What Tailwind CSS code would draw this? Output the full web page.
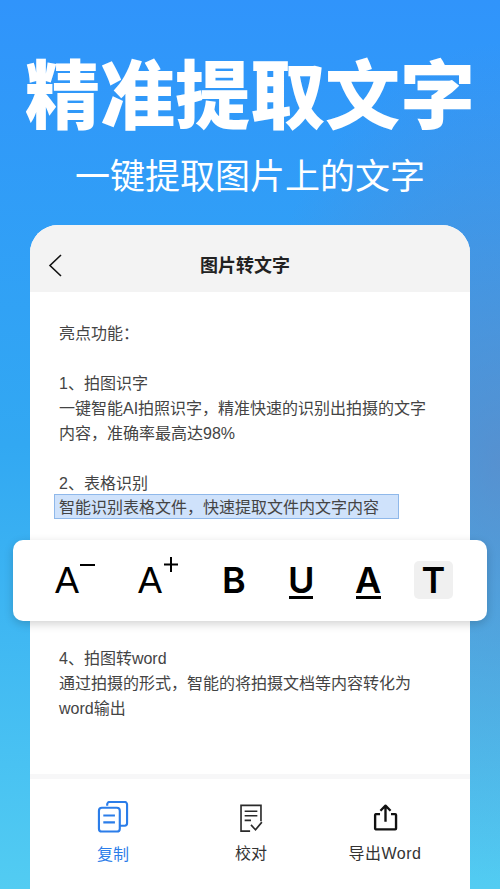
<!DOCTYPE html>
<html lang="zh">
<head>
  <meta charset="UTF-8">
  <title>精准提取文字</title>
  <script src="https://cdn.jsdelivr.net/npm/@tailwindcss/browser@4"></script>
</head>
<body class="font-['Liberation_Sans','Noto_Sans_CJK_SC',sans-serif]">
  <div class="relative w-[500px] h-[889px] overflow-hidden flex flex-col items-center bg-gradient-to-b from-[#3094fb] via-[#32a8f2] to-[#52ccf2]">
    <!-- darker patch on the right edge of the backdrop -->
    <div class="absolute inset-0 bg-[radial-gradient(ellipse_260px_420px_at_100%_52%,rgba(115,125,180,0.55),rgba(115,125,180,0))]"></div>

    <!-- Heading -->
    <h1 class="relative mt-[51px] text-[75px] leading-[92px] font-black text-white">精准提取文字</h1>
    <p class="relative mt-[12px] text-[35px] leading-[44px] text-white">一键提取图片上的文字</p>

    <!-- Phone card -->
    <div class="relative mt-[26px] w-[440px] h-[664px] flex flex-col bg-white rounded-t-[28px] overflow-hidden">
      <div class="relative h-[67px] shrink-0 flex items-center justify-center pt-[15px] pr-[10px] bg-[#f3f3f3]">
        <svg class="absolute left-[18px] top-[29px]" width="15" height="23" viewBox="0 0 15 23" fill="none" stroke="#111" stroke-width="1.6"><path d="M13 1 L2 11.5 L13 22"/></svg>
        <span class="text-[18px] font-bold text-[#222]">图片转文字</span>
      </div>
      <div class="flex-1 pl-[29px] pr-[30px] pt-[29px] text-[16px] leading-[25px] text-[#444]">
        <p>亮点功能：</p>
        <p class="mt-[25px]">1、拍图识字</p>
        <p>一键智能AI拍照识字，精准快速的识别出拍摄的文字内容，准确率最高达98%</p>
        <p class="mt-[25px]">2、表格识别</p>
        <p class="-mt-[2px] -ml-[5px] w-[345px] pl-[4px] bg-[#cfe2fb] border border-[#8fb8ea] h-[25px] whitespace-nowrap">智能识别表格文件，快速提取文件内文字内容</p>
        <p class="mt-[127px]">4、拍图转word</p>
        <p>通过拍摄的形式，智能的将拍摄文档等内容转化为word输出</p>
      </div>
      <div class="h-[115px] shrink-0 border-t-[5px] border-[#f7f7f8] grid grid-cols-[166px_110px_160px] text-[16px] text-[#333]">
        <div class="flex flex-col items-center pt-[22px] text-[#2b7de9]">
          <svg width="32" height="32" viewBox="0 0 32 33" fill="none" stroke="#2b7de9" stroke-width="2.2" stroke-linejoin="round">
            <path d="M10 5V3.5A2.5 2.5 0 0 1 12.500 1H28A2.500 2.500 0 0 1 30.500 3.500V23A2.500 2.500 0 0 1 28 25.500H23"/>
            <rect x="1.500" y="7" width="21.500" height="24.500" rx="3"/>
            <path d="M6 15H18M6 22H18"/>
          </svg>
          <span class="mt-[10px] leading-[24px]">复制</span>
        </div>
        <div class="flex flex-col items-center pt-[25px]">
          <svg width="26" height="29" viewBox="0 0 26 32" fill="none" stroke="#2a2a2a" stroke-width="1.800">
            <path d="M12 30H2V1.500H24V19"/>
            <path d="M6 8H20M6 13H20M6 18H13" />
            <path d="M13 23L18 28.500L25 20"/>
          </svg>
          <span class="mt-[9px] leading-[24px]">校对</span>
        </div>
        <div class="flex flex-col items-center pt-[25px] -translate-x-[1px]">
          <svg width="27" height="27" viewBox="0 0 27 32" fill="none" stroke="#111" stroke-width="2.800" stroke-linejoin="round">
            <path d="M7 12H2A1 1 0 0 0 1.200 13V29A1 1 0 0 0 2 30H25A1 1 0 0 0 26 29V13A1 1 0 0 0 25 12H20"/>
            <path d="M13.500 21V2M7.500 8L13.500 2L19.500 8"/>
          </svg>
          <span class="mt-[11px] leading-[24px] whitespace-nowrap tracking-[0.5px]">导出Word</span>
        </div>
      </div>
    </div>

    <!-- Text style toolbar -->
    <div class="absolute left-[13px] top-[540px] w-[474px] h-[81px] bg-white rounded-[10px] shadow-[0_3px_10px_rgba(0,0,0,0.18)] text-black">
      <div class="relative h-full flex items-center text-[36px] leading-[45px] font-['Liberation_Sans',sans-serif]">
        <span class="absolute left-[42px] top-[18px]">A</span>
        <span class="absolute left-[67px] top-[24px] w-[15px] h-[2px] bg-black"></span>
        <span class="absolute left-[125px] top-[18px]">A</span>
        <svg class="absolute left-[151px] top-[17px]" width="14" height="15" viewBox="0 0 14 15" stroke="#000" stroke-width="2"><path d="M7 0V15M0 7.500H14"/></svg>
        <span class="absolute left-[209px] top-[18px] font-['Inter',sans-serif] font-semibold">B</span>
        <span class="absolute left-[275px] top-[18px] font-['Inter',sans-serif] font-semibold">U</span>
        <span class="absolute left-[276px] top-[56px] w-[24px] h-[3px] bg-black"></span>
        <span class="absolute left-[342px] top-[18px] font-['Inter',sans-serif] font-semibold">A</span>
        <span class="absolute left-[343px] top-[56px] w-[25px] h-[3px] bg-black"></span>
        <span class="absolute left-[401px] top-[21px] w-[39px] h-[38px] rounded-[5px] bg-[#f0f0f0] flex items-center justify-center font-['Inter',sans-serif] font-semibold">T</span>
      </div>
    </div>
  </div>
</body>
</html>
